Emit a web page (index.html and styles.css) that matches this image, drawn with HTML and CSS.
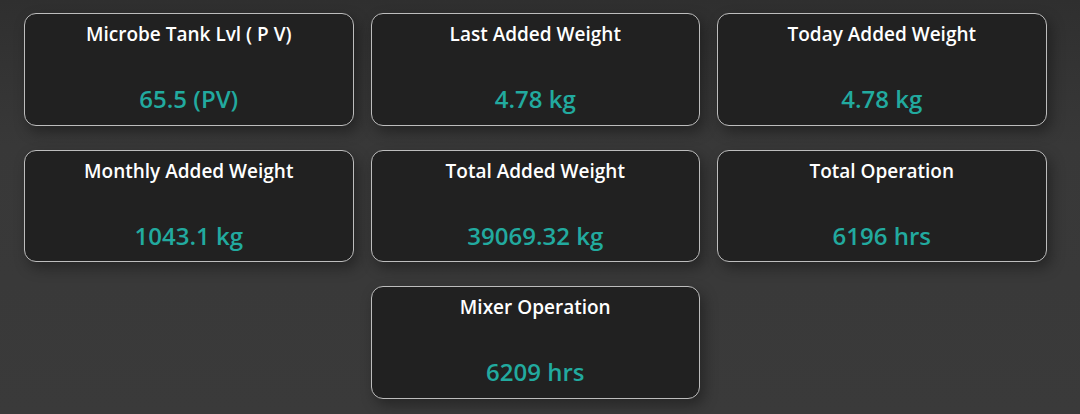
FILE: index.html
```html
<!DOCTYPE html>
<html lang="en">
<head>
    <meta charset="UTF-8">
    <meta name="viewport" content="width=device-width, initial-scale=1.0">
    <title>Plant Dashboard</title>
    <link rel="stylesheet" href="styles.css">
</head>
<body>
    <div class="stats-grid">
        <div class="stat-card">
            <h3>Microbe Tank Lvl ( P V)</h3>
            <p class="stat-value">65.5 (PV)</p>
        </div>
        <div class="stat-card">
            <h3>Last Added Weight</h3>
            <p class="stat-value">4.78 kg</p>
        </div>
        <div class="stat-card">
            <h3>Today Added Weight</h3>
            <p class="stat-value">4.78 kg</p>
        </div>
        <div class="stat-card">
            <h3>Monthly Added Weight</h3>
            <p class="stat-value">1043.1 kg</p>
        </div>
        <div class="stat-card">
            <h3>Total Added Weight</h3>
            <p class="stat-value">39069.32 kg</p>
        </div>
        <div class="stat-card">
            <h3>Total Operation</h3>
            <p class="stat-value">6196 hrs</p>
        </div>
        <!-- last card sits in the middle column -->
        <div class="stat-card center">
            <h3>Mixer Operation</h3>
            <p class="stat-value">6209 hrs</p>
        </div>
    </div>
</body>
</html>
```

FILE: styles.css
```css
* {
    margin: 0;
    padding: 0;
    box-sizing: border-box;
    font-family: 'Open Sans', 'Noto Sans', sans-serif;
}

html, body {
    height: 100%;
}

body {
    background: linear-gradient(to bottom, #2f2f2f 0%, #383838 35%, #3a3a3a 100%);
    color: #ffffff;
    padding: 13px 24px;
}

.stats-grid {
    display: grid;
    grid-template-columns: repeat(3, 329.5px);
    column-gap: 17px;
    row-gap: 24px;
}

.stat-card {
    height: 112.5px;
    background-color: #212121;
    border: 1px solid #bdbdbd;
    border-radius: 12px;
    box-shadow: 4px 6px 14px rgba(0, 0, 0, 0.35);
    text-align: center;
    padding-top: 8px;
}

.stat-card.center {
    grid-column: 2;
}

.stat-card h3 {
    font-size: 19px;
    font-weight: 600;
    line-height: 24px;
    color: #ffffff;
}

.stat-value {
    margin-top: 38px;
    font-size: 24px;
    font-weight: 600;
    line-height: 30px;
    color: #22aa9f;
}
```
